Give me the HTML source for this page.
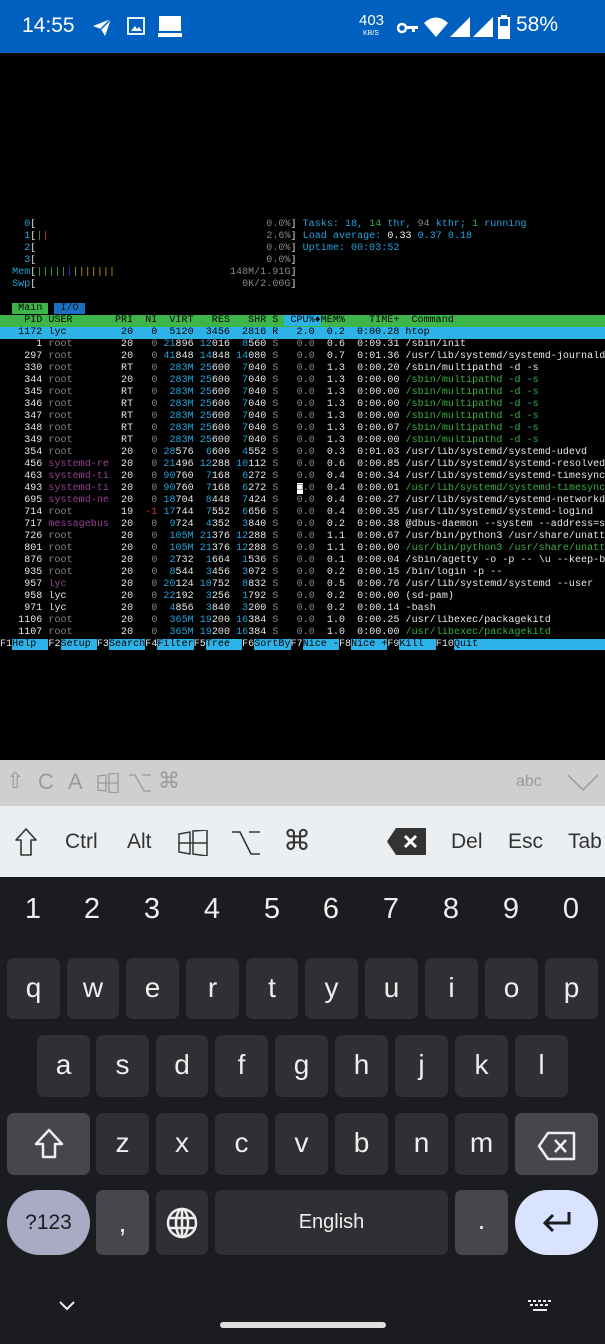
<!DOCTYPE html>
<html><head><meta charset="utf-8"><style>
*{margin:0;padding:0;box-sizing:border-box}
body{width:605px;height:1344px;background:#000;position:relative;overflow:hidden;font-family:"Liberation Sans",sans-serif}
.sb{position:absolute;left:0;top:0;width:605px;height:53px;background:#0060c0;color:#fff}
.term{position:absolute;left:0;top:219px;width:605px;font-family:"Liberation Mono",monospace;font-size:10px;line-height:12px;letter-spacing:0.05px;color:#e8e8e8}
.term div{white-space:pre;height:12px;overflow:hidden}
.c{color:#22a4dc}.g{color:#3cb043}.d{color:#8a8a8a}.p{color:#9a3f98}.r{color:#e03030}.w{color:#f0f0f0}.y{color:#d0a000}.b{color:#3a3ad0}.k{color:#000}
.hd{background:#3db54a;color:#000}
.hl{background:#2cb2e6;color:#000}
.fb span.l{background:#2cb2e6;color:#000}
.tb1{position:absolute;left:0;top:760px;width:605px;height:46px;background:#cfcfcf;color:#9a9a9a;font-size:22px}
.tb2{position:absolute;left:0;top:806px;width:605px;height:71px;background:#eceff1;color:#333;font-size:21px}
.kb{position:absolute;left:0;top:877px;width:605px;height:467px;background:#1b1c20}
.key{position:absolute;background:#2f3034;border-radius:7px;color:#eee;font-size:28px;text-align:center;line-height:60px}
.sp{background:#46474b}
.num{position:absolute;top:893px;color:#eee;font-size:29px;width:40px;text-align:center}
.ab{position:absolute}
</style></head><body>
<div class="sb">
 <div class="ab" style="left:22px;top:14px;font-size:21px">14:55</div>
 <svg class="ab" style="left:91px;top:16px" width="22" height="22" viewBox="0 0 22 22"><path d="M2 10 L20 3 L14 20 L10 13 Z" fill="#fff"/><path d="M10 13 L20 3" stroke="#0060c0" stroke-width="1.5"/></svg>
 <svg class="ab" style="left:127px;top:17px" width="18" height="18"><rect x="1" y="1" width="16" height="16" fill="none" stroke="#fff" stroke-width="1.8"/><path d="M4 14 L8 9 L10 12 L12 10 L15 14Z" fill="#fff"/></svg>
 <svg class="ab" style="left:158px;top:15px" width="24" height="24"><rect x="1" y="1" width="22" height="15" fill="#fff"/><rect x="0" y="18" width="24" height="4" fill="#fff"/></svg>
 <div class="ab" style="left:359px;top:13px;font-size:15px;line-height:15px">403</div>
 <div class="ab" style="left:363px;top:30px;font-size:7px">KB/S</div>
 <svg class="ab" style="left:397px;top:22px" width="22" height="12"><circle cx="5" cy="6" r="4" fill="none" stroke="#fff" stroke-width="2.5"/><rect x="9" y="4" width="12" height="3" fill="#fff"/><rect x="15" y="6" width="3" height="4" fill="#fff"/></svg>
 <svg class="ab" style="left:424px;top:16px" width="24" height="22"><path d="M0 7 Q12 -4 24 7 L12 21 Z" fill="#fff"/></svg>
 <svg class="ab" style="left:450px;top:17px" width="20" height="20"><path d="M0 20 L20 0 L20 20Z" fill="#fff"/></svg>
 <svg class="ab" style="left:473px;top:17px" width="20" height="20"><path d="M0 20 L20 0 L20 20Z" fill="#fff"/></svg>
 <svg class="ab" style="left:498px;top:15px" width="12" height="24"><rect x="3" y="0" width="6" height="3" fill="#fff"/><rect x="1" y="3" width="10" height="20" fill="none" stroke="#fff" stroke-width="2"/><rect x="1" y="11" width="10" height="12" fill="#fff"/></svg>
 <div class="ab" style="left:516px;top:13px;font-size:21px">58%</div>
</div>

<div class="term">
<div>    <span class="c">0</span>[                                      <span class="d">0.0%</span>] <span class="c">Tasks: </span><span class="c">18</span><span class="c">, </span><span class="g">14</span><span class="c"> thr, </span><span class="d">94</span><span class="c"> kthr; </span><span class="g">1</span><span class="c"> running</span></div>
<div>    <span class="c">1</span>[<span class="g">|</span><span class="r">|</span>                                    <span class="d">2.6%</span>] <span class="c">Load average: </span><span class="w">0.33 </span><span class="c">0.37 </span><span class="c">0.18</span></div>
<div>    <span class="c">2</span>[                                      <span class="d">0.0%</span>] <span class="c">Uptime: </span><span class="c">00:03:52</span></div>
<div>    <span class="c">3</span>[                                      <span class="d">0.0%</span>]</div>
<div>  <span class="c">Mem</span>[<span class="g">|||||</span><span class="b">|</span><span class="y">|||||||</span>                   <span class="d">148M/1.91G</span>]</div>
<div>  <span class="c">Swp</span>[                                  <span class="d">0K/2.00G</span>]</div>
<div> </div>
<div>  <span class="hd"> Main </span> <span style="background:#1a6fc0;color:#111"> I/O </span></div>
<div class="hd">    PID USER       PRI  NI  VIRT   RES   SHR S <span class="hl"> CPU%♦</span>MEM%    TIME+  Command                                  </div>
<div class="hl">   1172 lyc         20   0  5120  3456  2816 R   2.0  0.2  0:00.28 htop                                       </div>
<div>      1 <span class="d">root</span>        20   <span class="d">0</span> <span class="c">21</span>896 <span class="c">12</span>016  <span class="c">8</span>560 <span class="d">S</span>   <span class="d">0.0</span>  0.6  0:09.31 /sbin/init</div>
<div>    297 <span class="d">root</span>        20   <span class="d">0</span> <span class="c">41</span>848 <span class="c">14</span>848 <span class="c">14</span>080 <span class="d">S</span>   <span class="d">0.0</span>  0.7  0:01.36 /usr/lib/systemd/systemd-journald</div>
<div>    330 <span class="d">root</span>        RT   <span class="d">0</span>  <span class="c">283M</span> <span class="c">25</span>600  <span class="c">7</span>040 <span class="d">S</span>   <span class="d">0.0</span>  1.3  0:00.20 /sbin/multipathd -d -s</div>
<div>    344 <span class="d">root</span>        20   <span class="d">0</span>  <span class="c">283M</span> <span class="c">25</span>600  <span class="c">7</span>040 <span class="d">S</span>   <span class="d">0.0</span>  1.3  0:00.00 <span class="g">/sbin/multipathd -d -s</span></div>
<div>    345 <span class="d">root</span>        RT   <span class="d">0</span>  <span class="c">283M</span> <span class="c">25</span>600  <span class="c">7</span>040 <span class="d">S</span>   <span class="d">0.0</span>  1.3  0:00.00 <span class="g">/sbin/multipathd -d -s</span></div>
<div>    346 <span class="d">root</span>        RT   <span class="d">0</span>  <span class="c">283M</span> <span class="c">25</span>600  <span class="c">7</span>040 <span class="d">S</span>   <span class="d">0.0</span>  1.3  0:00.00 <span class="g">/sbin/multipathd -d -s</span></div>
<div>    347 <span class="d">root</span>        RT   <span class="d">0</span>  <span class="c">283M</span> <span class="c">25</span>600  <span class="c">7</span>040 <span class="d">S</span>   <span class="d">0.0</span>  1.3  0:00.00 <span class="g">/sbin/multipathd -d -s</span></div>
<div>    348 <span class="d">root</span>        RT   <span class="d">0</span>  <span class="c">283M</span> <span class="c">25</span>600  <span class="c">7</span>040 <span class="d">S</span>   <span class="d">0.0</span>  1.3  0:00.07 <span class="g">/sbin/multipathd -d -s</span></div>
<div>    349 <span class="d">root</span>        RT   <span class="d">0</span>  <span class="c">283M</span> <span class="c">25</span>600  <span class="c">7</span>040 <span class="d">S</span>   <span class="d">0.0</span>  1.3  0:00.00 <span class="g">/sbin/multipathd -d -s</span></div>
<div>    354 <span class="d">root</span>        20   <span class="d">0</span> <span class="c">28</span>576  <span class="c">6</span>600  <span class="c">4</span>552 <span class="d">S</span>   <span class="d">0.0</span>  0.3  0:01.03 /usr/lib/systemd/systemd-udevd</div>
<div>    456 <span class="p">systemd-re</span>  20   <span class="d">0</span> <span class="c">21</span>496 <span class="c">12</span>288 <span class="c">10</span>112 <span class="d">S</span>   <span class="d">0.0</span>  0.6  0:00.85 /usr/lib/systemd/systemd-resolved</div>
<div>    463 <span class="p">systemd-ti</span>  20   <span class="d">0</span> <span class="c">90</span>760  <span class="c">7</span>168  <span class="c">6</span>272 <span class="d">S</span>   <span class="d">0.0</span>  0.4  0:00.34 /usr/lib/systemd/systemd-timesync</div>
<div>    493 <span class="p">systemd-ti</span>  20   <span class="d">0</span> <span class="c">90</span>760  <span class="c">7</span>168  <span class="c">6</span>272 <span class="d">S</span>   <span style="background:#fff;color:#000">□</span><span class="d">.0</span>  0.4  0:00.01 <span class="g">/usr/lib/systemd/systemd-timesync</span></div>
<div>    695 <span class="p">systemd-ne</span>  20   <span class="d">0</span> <span class="c">18</span>704  <span class="c">8</span>448  <span class="c">7</span>424 <span class="d">S</span>   <span class="d">0.0</span>  0.4  0:00.27 /usr/lib/systemd/systemd-networkd</div>
<div>    714 <span class="d">root</span>        19  <span class="r">-1</span> <span class="c">17</span>744  <span class="c">7</span>552  <span class="c">6</span>656 <span class="d">S</span>   <span class="d">0.0</span>  0.4  0:00.35 /usr/lib/systemd/systemd-logind</div>
<div>    717 <span class="p">messagebus</span>  20   <span class="d">0</span>  <span class="c">9</span>724  <span class="c">4</span>352  <span class="c">3</span>840 <span class="d">S</span>   <span class="d">0.0</span>  0.2  0:00.38 @dbus-daemon --system --address=s</div>
<div>    726 <span class="d">root</span>        20   <span class="d">0</span>  <span class="c">105M</span> <span class="c">21</span>376 <span class="c">12</span>288 <span class="d">S</span>   <span class="d">0.0</span>  1.1  0:00.67 /usr/bin/python3 /usr/share/unatt</div>
<div>    801 <span class="d">root</span>        20   <span class="d">0</span>  <span class="c">105M</span> <span class="c">21</span>376 <span class="c">12</span>288 <span class="d">S</span>   <span class="d">0.0</span>  1.1  0:00.00 <span class="g">/usr/bin/python3 /usr/share/unatt</span></div>
<div>    876 <span class="d">root</span>        20   <span class="d">0</span>  <span class="c">2</span>732  <span class="c">1</span>664  <span class="c">1</span>536 <span class="d">S</span>   <span class="d">0.0</span>  0.1  0:00.04 /sbin/agetty -o -p -- \u --keep-b</div>
<div>    935 <span class="d">root</span>        20   <span class="d">0</span>  <span class="c">8</span>544  <span class="c">3</span>456  <span class="c">3</span>072 <span class="d">S</span>   <span class="d">0.0</span>  0.2  0:00.15 /bin/login -p --</div>
<div>    957 <span class="p">lyc</span>         20   <span class="d">0</span> <span class="c">20</span>124 <span class="c">10</span>752  <span class="c">8</span>832 <span class="d">S</span>   <span class="d">0.0</span>  0.5  0:00.76 /usr/lib/systemd/systemd --user</div>
<div>    958 lyc         20   <span class="d">0</span> <span class="c">22</span>192  <span class="c">3</span>256  <span class="c">1</span>792 <span class="d">S</span>   <span class="d">0.0</span>  0.2  0:00.00 (sd-pam)</div>
<div>    971 lyc         20   <span class="d">0</span>  <span class="c">4</span>856  <span class="c">3</span>840  <span class="c">3</span>200 <span class="d">S</span>   <span class="d">0.0</span>  0.2  0:00.14 -bash</div>
<div>   1106 <span class="d">root</span>        20   <span class="d">0</span>  <span class="c">365M</span> <span class="c">19</span>200 <span class="c">16</span>384 <span class="d">S</span>   <span class="d">0.0</span>  1.0  0:00.25 /usr/libexec/packagekitd</div>
<div>   1107 <span class="d">root</span>        20   <span class="d">0</span>  <span class="c">365M</span> <span class="c">19</span>200 <span class="c">16</span>384 <span class="d">S</span>   <span class="d">0.0</span>  1.0  0:00.00 <span class="g">/usr/libexec/packagekitd</span></div>
<div class="fb">F1<span class="l">Help  </span>F2<span class="l">Setup </span>F3<span class="l">Search</span>F4<span class="l">Filter</span>F5<span class="l">Tree  </span>F6<span class="l">SortBy</span>F7<span class="l">Nice -</span>F8<span class="l">Nice +</span>F9<span class="l">Kill  </span>F10<span class="l">Quit                          </span></div>
</div>

<div class="tb1">
 <span class="ab" style="left:6px;top:8px">⇧</span>
 <span class="ab" style="left:38px;top:9px">C</span>
 <span class="ab" style="left:68px;top:9px">A</span>
 <svg class="ab" style="left:97px;top:13px" width="22" height="20"><path d="M1 3 L9 2 V18 L1 17 Z M12 1 L21 0 V20 L12 19 Z M1 10 H21" fill="none" stroke="#9a9a9a" stroke-width="1.3"/></svg>
 <svg class="ab" style="left:128px;top:13px" width="24" height="20"><path d="M1 2 H7 L16 18 H23 M14 2 H23" fill="none" stroke="#9a9a9a" stroke-width="1.3"/></svg>
 <span class="ab" style="left:158px;top:8px">⌘</span>
 <span class="ab" style="left:516px;top:13px;font-size:16px">abc</span>
 <svg class="ab" style="left:567px;top:14px" width="32" height="18"><path d="M1 1 L16 16 L31 1" fill="none" stroke="#9a9a9a" stroke-width="1.5"/></svg>
</div>
<div class="tb2">
 <svg class="ab" style="left:15px;top:22px" width="22" height="28"><path d="M11 1 L21 12 H16 V27 H6 V12 H1 Z" fill="none" stroke="#333" stroke-width="1.6" stroke-linejoin="round"/></svg>
 <span class="ab" style="left:65px;top:24px">Ctrl</span>
 <span class="ab" style="left:127px;top:24px">Alt</span>
 <svg class="ab" style="left:178px;top:24px" width="30" height="26"><path d="M1 4 L12 2 V24 L1 22 Z M15 1 L29 0 V26 L15 24 Z M1 13 H29" fill="none" stroke="#333" stroke-width="1.5"/></svg>
 <svg class="ab" style="left:231px;top:24px" width="30" height="26"><path d="M1 2 H9 L20 24 H29 M18 2 H29" fill="none" stroke="#333" stroke-width="1.6"/></svg>
 <span class="ab" style="left:283px;top:18px;font-size:28px">⌘</span>
 <svg class="ab" style="left:387px;top:22px" width="39" height="27"><path d="M9 0 H39 V27 H9 L0 13.5Z" fill="#333"/><path d="M18 8 L29 19 M29 8 L18 19" stroke="#fff" stroke-width="3"/></svg>
 <span class="ab" style="left:451px;top:24px">Del</span>
 <span class="ab" style="left:508px;top:24px">Esc</span>
 <span class="ab" style="left:568px;top:24px">Tab</span>
</div>

<div class="kb"></div>
<div class="num" style="left:13px">1</div><div class="num" style="left:72px">2</div><div class="num" style="left:132px">3</div><div class="num" style="left:192px">4</div><div class="num" style="left:252px">5</div><div class="num" style="left:311px">6</div><div class="num" style="left:371px">7</div><div class="num" style="left:431px">8</div><div class="num" style="left:491px">9</div><div class="num" style="left:551px">0</div>

<div class="key" style="left:7px;top:958px;width:53px;height:61px">q</div>
<div class="key" style="left:67px;top:958px;width:52px;height:61px">w</div>
<div class="key" style="left:126px;top:958px;width:53px;height:61px">e</div>
<div class="key" style="left:186px;top:958px;width:53px;height:61px">r</div>
<div class="key" style="left:246px;top:958px;width:52px;height:61px">t</div>
<div class="key" style="left:305px;top:958px;width:53px;height:61px">y</div>
<div class="key" style="left:365px;top:958px;width:53px;height:61px">u</div>
<div class="key" style="left:425px;top:958px;width:53px;height:61px">i</div>
<div class="key" style="left:485px;top:958px;width:53px;height:61px">o</div>
<div class="key" style="left:545px;top:958px;width:53px;height:61px">p</div>

<div class="key" style="left:37px;top:1035px;width:53px;height:62px">a</div>
<div class="key" style="left:96px;top:1035px;width:53px;height:62px">s</div>
<div class="key" style="left:156px;top:1035px;width:52px;height:62px">d</div>
<div class="key" style="left:215px;top:1035px;width:53px;height:62px">f</div>
<div class="key" style="left:275px;top:1035px;width:53px;height:62px">g</div>
<div class="key" style="left:335px;top:1035px;width:53px;height:62px">h</div>
<div class="key" style="left:395px;top:1035px;width:53px;height:62px">j</div>
<div class="key" style="left:455px;top:1035px;width:53px;height:62px">k</div>
<div class="key" style="left:515px;top:1035px;width:53px;height:62px">l</div>

<div class="key sp" style="left:7px;top:1113px;width:83px;height:62px"><svg style="margin-top:15px" width="30" height="32" viewBox="0 0 30 32"><path d="M15 2 L28 16 H21 V29 H9 V16 H2 Z" fill="none" stroke="#eee" stroke-width="2.5" stroke-linejoin="round"/></svg></div>
<div class="key" style="left:96px;top:1113px;width:53px;height:62px">z</div>
<div class="key" style="left:156px;top:1113px;width:52px;height:62px">x</div>
<div class="key" style="left:215px;top:1113px;width:53px;height:62px">c</div>
<div class="key" style="left:275px;top:1113px;width:53px;height:62px">v</div>
<div class="key" style="left:335px;top:1113px;width:53px;height:62px">b</div>
<div class="key" style="left:395px;top:1113px;width:53px;height:62px">n</div>
<div class="key" style="left:455px;top:1113px;width:53px;height:62px">m</div>
<div class="key sp" style="left:515px;top:1113px;width:83px;height:62px"><svg style="margin-top:18px" width="40" height="30" viewBox="0 0 40 30"><path d="M11 2 H37 V28 H11 L2 15 Z" fill="none" stroke="#eee" stroke-width="2.5" stroke-linejoin="round"/><path d="M18 9 L29 21 M29 9 L18 21" stroke="#eee" stroke-width="2.5"/></svg></div>

<div class="key" style="left:7px;top:1190px;width:83px;height:65px;border-radius:33px;background:#a9abc4;color:#1b1c20;font-size:21px;line-height:65px">?123</div>
<div class="key sp" style="left:96px;top:1190px;width:53px;height:65px;line-height:65px">,</div>
<div class="key" style="left:156px;top:1190px;width:52px;height:65px"><svg style="margin-top:17px" width="32" height="32" viewBox="0 0 32 32"><circle cx="16" cy="16" r="14" fill="none" stroke="#eee" stroke-width="2.5"/><ellipse cx="16" cy="16" rx="6" ry="14" fill="none" stroke="#eee" stroke-width="2.5"/><path d="M2 11 H30 M2 21 H30 M16 2 V30" stroke="#eee" stroke-width="2.5"/></svg></div>
<div class="key" style="left:215px;top:1190px;width:233px;height:65px;font-size:20px;line-height:65px">English</div>
<div class="key sp" style="left:455px;top:1190px;width:53px;height:65px;line-height:60px">.</div>
<div class="key" style="left:515px;top:1190px;width:83px;height:65px;border-radius:33px;background:#d9e2ff"><svg style="margin-top:20px" width="30" height="24" viewBox="0 0 30 24"><path d="M27 2 V13 H4 M11 5 L3 13 L11 21" fill="none" stroke="#1b1c20" stroke-width="3"/></svg></div>

<svg class="ab" style="left:59px;top:1301px" width="16" height="10"><path d="M1 1 L8 8 L15 1" fill="none" stroke="#eee" stroke-width="2"/></svg>
<div class="ab" style="left:220px;top:1322px;width:166px;height:6px;border-radius:3px;background:#e0e0e0"></div>
<svg class="ab" style="left:528px;top:1300px" width="24" height="16"><g fill="#eee"><rect x="0" y="0" width="3" height="2"/><rect x="5" y="0" width="3" height="2"/><rect x="10" y="0" width="3" height="2"/><rect x="15" y="0" width="3" height="2"/><rect x="20" y="0" width="3" height="2"/><rect x="2" y="4" width="3" height="2"/><rect x="7" y="4" width="3" height="2"/><rect x="12" y="4" width="3" height="2"/><rect x="17" y="4" width="3" height="2"/><rect x="5" y="9" width="14" height="2"/></g></svg>
</body></html>
